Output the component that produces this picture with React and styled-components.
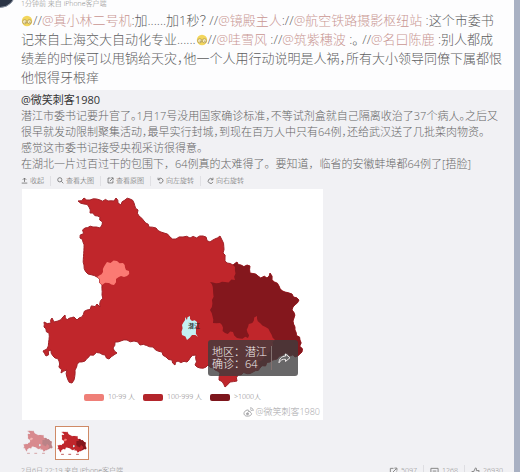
import React from "react";
import styled, { createGlobalStyle } from "styled-components";

const GlobalStyle = createGlobalStyle`
  *, *::before, *::after { box-sizing: border-box; }
  body {
    margin: 0;
    overflow: hidden;
    background: #fdfdfe;
    font-family: "Open Sans", "Noto Sans CJK SC", sans-serif;
    font-weight: 300;
    color: #5e5e5e;
  }
  button { font: inherit; color: inherit; background: none; border: 0; padding: 0; cursor: pointer; }
  a { color: inherit; text-decoration: none; }
  p, h2 { margin: 0; }
  svg { display: block; flex: none; }
`;

const Page = styled.div`
  display: grid;
  grid-template-columns: minmax(0, 1fr) 6px;
  height: 100vh;
  overflow: hidden;
  background: #a9b1c3;
`;

const Feed = styled.main`
  background: #f1f1f4;
  overflow: hidden;
`;

const Post = styled.article`
  background: #fdfdfe;
  padding: 0 0 3px 21px;
`;

const PostHead = styled.header`
  position: relative;
  display: flex;
  align-items: center;
  height: 10px;
  font-size: 7px;
  line-height: 10px;
  color: #888;
  white-space: nowrap;
  padding-bottom: 3px;
`;

const Avatar = styled.span`
  position: absolute;
  left: -37px;
  top: -24px;
  width: 32px;
  height: 32px;
  border-radius: 50%;
  border: 1px solid #8b93a2;
  background: #2b3446;
`;

const PostText = styled.p`
  font-size: 13px;
  line-height: 19px;
  white-space: nowrap;
  font-feature-settings: "halt";
  padding-top: 1px;
`;

const Mention = styled.a`
  color: #c99793;
`;

const FaceIcon = styled.svg`
  display: inline-block;
  vertical-align: -2px;
`;

const Quote = styled.section`
  padding: 2px 0 0 21px;
`;

const QuoteAuthor = styled.h2`
  font-size: 11px;
  line-height: 16px;
  font-weight: 400;
  color: #333;
`;

const QuoteText = styled.p`
  font-size: 11px;
  line-height: 16px;
  white-space: nowrap;
  color: #666;
  font-feature-settings: ${(p) => (p.$compact ? '"halt"' : "normal")};
`;

const Toolbar = styled.div`
  display: flex;
  align-items: center;
  height: 17px;
  font-size: 7px;
  color: #666;
`;

const Tool = styled.button`
  display: flex;
  align-items: center;
  gap: 2px;
  line-height: 10px;
  white-space: nowrap;
  & + & {
    margin-left: 6px;
    padding-left: 6px;
    border-left: 1px solid #e0e0e4;
  }
`;

const MapCard = styled.figure`
  position: relative;
  margin: 0 0 0 1px;
  max-width: 301px;
  background: #fff;
  padding-bottom: 1px;
`;

const Legend = styled.figcaption`
  display: flex;
  align-items: center;
  gap: 8px;
  padding-left: 62px;
  height: 12px;
  margin-top: 2px;
  font-size: 7px;
  line-height: 12px;
  color: #777;
  white-space: nowrap;
`;

const LegendItem = styled.span`
  display: flex;
  align-items: center;
  gap: 4px;
  &::before {
    content: "";
    width: 20px;
    height: 7px;
    border-radius: 2px;
    background: ${(p) => p.$color};
  }
`;

const Watermark = styled.span`
  display: flex;
  justify-content: flex-end;
  align-items: center;
  gap: 1px;
  padding: 2px 3px 0 0;
  font-size: 9px;
  line-height: 14px;
  color: #a5a5a8;
`;

const Tooltip = styled.div`
  position: absolute;
  left: 186px;
  top: 151px;
  display: flex;
  align-items: center;
  justify-content: space-between;
  width: 90px;
  height: 36px;
  padding: 0 7px 0 4px;
  border-radius: 3px;
  background: rgba(62, 60, 62, 0.78);
  color: #f4f0f0;
  font-size: 11px;
  line-height: 12px;
  white-space: nowrap;
`;

const TooltipText = styled.div`
  border-right: 1px solid #83716f;
  padding-right: 4px;
`;

const Thumbs = styled.div`
  display: flex;
  gap: 2px;
  padding: 6px 0 0 1px;
`;

const Thumb = styled.button`
  display: grid;
  place-items: center;
  width: ${(p) => (p.$active ? "34px" : "31px")};
  height: ${(p) => (p.$active ? "34px" : "31px")};
  background: ${(p) => (p.$active ? "#fff" : "transparent")};
  border: ${(p) => (p.$active ? "1px solid #cf8a66" : "0")};
  opacity: ${(p) => (p.$active ? 1 : 0.5)};
`;

const Footer = styled.footer`
  display: flex;
  justify-content: space-between;
  align-items: center;
  padding: 5px 11px 0 0;
  font-size: 7px;
  line-height: 12px;
  color: #888;
  white-space: nowrap;
`;

const Stats = styled.div`
  display: flex;
  align-items: center;
`;

const Stat = styled.button`
  display: flex;
  align-items: center;
  gap: 3px;
  & + & {
    margin-left: 6px;
    padding-left: 6px;
    border-left: 1px solid #dedee2;
  }
`;

const PROVINCE = [
  [78,201],[84,198],[90,200],[100,200],[108,201],[114,201],[116,198],[118,203],[121,205],[125,200],[130,199],[134,203],[138,210],[139,216],[144,221],[149,227],[156,228],[164,233],[170,237],[176,239],[183,237],[190,238],[203,236],[210,242],[220,236],[222,240],[223,253],[227,263],[233,265],[237,262],[241,265],[250,266],[250,273],[258,276],[267,278],[270,273],[272,280],[279,286],[285,292],[292,294],[299,300],[293,307],[294,318],[295,330],[300,340],[302,352],[295,357],[285,353],[277,359],[270,362],[260,368],[253,372],[238,375],[237,381],[230,382],[225,387],[219,380],[220,373],[213,368],[208,365],[200,368],[195,365],[196,355],[190,358],[187,362],[178,361],[175,365],[172,360],[166,357],[162,352],[153,347],[140,345],[134,341],[127,340],[115,342],[113,348],[117,353],[109,359],[100,353],[90,355],[85,361],[79,362],[75,370],[72,383],[68,380],[67,370],[61,373],[59,361],[55,358],[51,350],[46,356],[43,351],[47,349],[49,333],[44,327],[44,322],[51,323],[52,318],[54,322],[58,321],[65,315],[67,320],[74,317],[77,320],[87,310],[97,304],[100,307],[102,295],[102,285],[97,277],[88,274],[84,265],[83,242],[80,238],[85,228],[93,227],[100,228],[102,225],[100,217],[90,213],[89,207],[84,204],
];
const LOW = [[97,277],[103,272],[107,262],[117,261],[123,263],[126,270],[129,271],[127,276],[121,276],[116,279],[114,285],[109,283],[102,285]];
const HIGH = [[233,265],[237,262],[241,265],[250,266],[250,273],[258,276],[267,278],[270,273],[272,280],[279,286],[285,292],[292,294],[299,300],[293,307],[294,318],[295,330],[300,340],[302,352],[295,357],[285,353],[277,359],[270,362],[260,368],[258,362],[268,353],[275,340],[270,332],[260,323],[257,316],[248,327],[248,338],[237,338],[233,332],[225,333],[220,323],[213,323],[210,310],[212,300],[213,290],[210,282],[225,282],[235,280],[235,267]];
const CITY = [[185,317],[187,320],[190,316],[192,321],[197,322],[196,330],[198,337],[192,335],[187,340],[182,335],[182,325]];

// Splits each border segment and nudges the new points so that it reads as a county line.
function border(points) {
  const out = [];
  points.forEach(([x, y], i) => {
    const [nx, ny] = points[(i + 1) % points.length];
    const length = Math.hypot(nx - x, ny - y);
    const steps = Math.max(1, Math.round(length / 3));
    for (let s = 0; s < steps; s += 1) {
      const px = x + ((nx - x) * s) / steps;
      const py = y + ((ny - y) * s) / steps;
      const n = s === 0 ? 0 : Math.sin(px * 12.9 + py * 78.2) * 1.3;
      out.push(`${(px - ((ny - y) / length) * n).toFixed(1)},${(py + ((nx - x) / length) * n).toFixed(1)}`);
    }
  });
  return out.join(" ");
}

const shapes = { province: border(PROVINCE), low: border(LOW), high: border(HIGH), city: border(CITY) };

function Hubei({ viewBox, width, height, thumb }) {
  return (
    <svg viewBox={viewBox} width={width} height={height} role="img" aria-label="湖北省">
      <polygon points={shapes.province} fill="#c0262b" stroke="#a02026" strokeWidth="1" strokeLinejoin="round" />
      <polygon points={shapes.high} fill="#84171d" />
      <polygon points={shapes.low} fill="#fb7a73" />
      <polygon points={shapes.city} fill="#c4f1f4" />
      {thumb ? (
        <path d="M75 402h25M140 402h25M210 402h25" stroke="#a33" strokeWidth="7" />
      ) : (
        <text x="188" y="328" fontSize="6" fontWeight="500" fill="#222">潜江</text>
      )}
    </svg>
  );
}

function Face() {
  return (
    <FaceIcon width="12" height="12" viewBox="0 0 12 12" aria-hidden="true">
      <circle cx="6" cy="6" r="5.2" fill="#f3d65c" />
      <circle cx="3.7" cy="6.8" r="2.1" fill="#f8edbd" stroke="#b39a50" strokeWidth=".8" />
      <circle cx="8.4" cy="6.8" r="2.1" fill="#f8edbd" stroke="#b39a50" strokeWidth=".8" />
      <path d="M3.8 7.2h.8M8.5 7.2h.8" stroke="#6a5430" />
    </FaceIcon>
  );
}

const ICONS = {
  up: "M5 7V1.5M2.5 4 5 1.5 7.5 4M1 8.7h8",
  search: "M7 4A3 3 0 1 1 1 4a3 3 0 0 1 6 0ZM6.3 6.3 9 9",
  open: "M5 1.5H1.5v7h7V5M4 6l4.5-4.5M6 1.2h2.8V4",
  left: "M1.5 1v3h3M2 3.5A3.5 3.5 0 1 1 3 8",
  right: "M8.5 1v3h-3M8 3.5A3.5 3.5 0 1 0 8.5 7",
  comment: "M1 1.5h8v7H1zM3 4.5h4",
  like: "M1 5h2v4H1zM3 5 5 1l1 .5L6 4h3L8 9H3",
};

function Icon({ name, size = 8 }) {
  return (
    <svg width={size} height={size} viewBox="0 0 10 10" fill="none" stroke="currentColor" strokeWidth="1.1" aria-hidden="true">
      <path d={ICONS[name]} />
    </svg>
  );
}

const TOOLS = [["up", "收起"], ["search", "查看大图"], ["open", "查看原图"], ["left", "向左旋转"], ["right", "向右旋转"]];
const STATS = [["open", "5097"], ["comment", "1268"], ["like", "26930"]];

export default function App() {
  return (
    <>
      <GlobalStyle />
      <Page>
        <Feed>
          <Post>
            <PostHead><Avatar />1分钟前 来自 iPhone客户端</PostHead>
            <PostText>
              <Face />//<Mention href="#">@真小林二号机</Mention>:加......加1秒？ //<Mention href="#">@镜殿主人</Mention>://<Mention href="#">@航空铁路摄影枢纽站</Mention> :这个市委书<br />
              记来自上海交大自动化专业......<Face />//<Mention href="#">@哇雪风</Mention> ://<Mention href="#">@筑紫穗波</Mention> :。 //<Mention href="#">@名曰陈鹿</Mention> :别人都成<br />
              绩差的时候可以甩锅给天灾，他一个人用行动说明是人祸，所有大小领导同僚下属都恨<br />
              他恨得牙根痒
            </PostText>
          </Post>
          <Quote>
            <QuoteAuthor><a href="#">@微笑刺客1980</a></QuoteAuthor>
            <QuoteText $compact>
              潜江市委书记要升官了。1月17号没用国家确诊标准，不等试剂盒就自己隔离收治了37个病人。之后又<br />
              很早就发动限制聚集活动，最早实行封城，到现在百万人中只有64例，还给武汉送了几批菜肉物资。<br />
              感觉这市委书记接受央视采访很得意。
            </QuoteText>
            <QuoteText>
              在湖北一片过百过干的包围下，64例真的太难得了。要知道，临省的安徽蚌埠都64例了[捂脸]
            </QuoteText>
            <Toolbar>
              {TOOLS.map(([icon, label]) => <Tool key={icon}><Icon name={icon} size={7} />{label}</Tool>)}
            </Toolbar>
            <MapCard>
              <Hubei viewBox="22 189 301 200" width="301" height="200" />
              <Legend>
                <LegendItem $color="#ef7f78">10-99 人</LegendItem>
                <LegendItem $color="#b3252b">100-999 人</LegendItem>
                <LegendItem $color="#7d161c">&gt;1000人</LegendItem>
              </Legend>
              <Watermark>
                <svg width="11" height="10" viewBox="0 0 11 10" fill="none" stroke="currentColor" aria-hidden="true">
                  <path d="M5 3C2 3 0 6 1.5 8s7 1.300 7-1.200c0-1-1-1.300-1-1.300s.5-1.500-2-.8C5.500 4 6 3 5 3Z" />
                  <path d="M7 1c2-.4 3.500 1 3 3M7.300 2.700c1 0 1.500.5 1.300 1.300" />
                  <circle cx="4.500" cy="6.800" r="1" fill="currentColor" />
                </svg>
                @微笑刺客1980
              </Watermark>
              <Tooltip>
                <TooltipText>地区：潜江<br />确诊：64</TooltipText>
                <svg width="13" height="13" viewBox="0 0 13 13" fill="none" stroke="#efeaea" strokeLinejoin="round" aria-hidden="true">
                  <path d="M7.500 2 12 5.700 7.500 9.500V7.300C4.500 7 2.500 8 1 10.800 1 7 3.500 4.200 7.500 4.100Z" />
                </svg>
              </Tooltip>
            </MapCard>
            <Thumbs>
              <Thumb aria-label="图片1"><Hubei thumb viewBox="38 192 270 216" width="30" height="30" /></Thumb>
              <Thumb $active aria-label="图片2"><Hubei thumb viewBox="38 192 270 216" width="30" height="30" /></Thumb>
            </Thumbs>
            <Footer>
              <a href="#">2月6日 22:19 来自 iPhone客户端</a>
              <Stats>
                {STATS.map(([icon, count]) => <Stat key={icon}><Icon name={icon} size={9} />{count}</Stat>)}
              </Stats>
            </Footer>
          </Quote>
        </Feed>
      </Page>
    </>
  );
}
